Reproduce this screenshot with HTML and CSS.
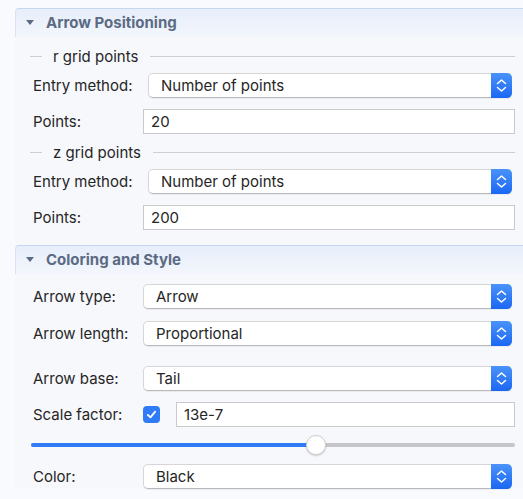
FILE: index.html
```html
<!DOCTYPE html>
<html lang="en">
<head>
<meta charset="utf-8">
<title>Arrow settings</title>
<link rel="stylesheet" href="styles.css">
</head>
<body>
<div class="panel">

  <section class="group">
    <div class="group-head"><span class="caret"></span>Arrow Positioning</div>
    <div class="group-body positioning">
      <div class="legend"><span class="stub"></span><span class="legend-text">r grid points</span><span class="rule"></span></div>
      <div class="row">
        <label class="label">Entry method:</label>
        <div class="select inset">Number of points<span class="stepper"><svg viewBox="0 0 21 25" width="21" height="25"><path d="M6.5 10.5 10.5 7 14.5 10.5M6.5 14.5 10.5 18 14.5 14.5"/></svg></span></div>
      </div>
      <div class="row">
        <label class="label">Points:</label>
        <div class="field">20</div>
      </div>
      <div class="legend"><span class="stub"></span><span class="legend-text">z grid points</span><span class="rule"></span></div>
      <div class="row">
        <label class="label">Entry method:</label>
        <div class="select inset">Number of points<span class="stepper"><svg viewBox="0 0 21 25" width="21" height="25"><path d="M6.5 10.5 10.5 7 14.5 10.5M6.5 14.5 10.5 18 14.5 14.5"/></svg></span></div>
      </div>
      <div class="row">
        <label class="label">Points:</label>
        <div class="field">200</div>
      </div>
    </div>
  </section>

  <section class="group">
    <div class="group-head"><span class="caret"></span>Coloring and Style</div>
    <div class="group-body styling">
      <div class="row">
        <label class="label">Arrow type:</label>
        <div class="select">Arrow<span class="stepper"><svg viewBox="0 0 21 25" width="21" height="25"><path d="M6.5 10.5 10.5 7 14.5 10.5M6.5 14.5 10.5 18 14.5 14.5"/></svg></span></div>
      </div>
      <div class="row gap-l">
        <label class="label">Arrow length:</label>
        <div class="select">Proportional<span class="stepper"><svg viewBox="0 0 21 25" width="21" height="25"><path d="M6.5 10.5 10.5 7 14.5 10.5M6.5 14.5 10.5 18 14.5 14.5"/></svg></span></div>
      </div>
      <div class="row gap-xl">
        <label class="label">Arrow base:</label>
        <div class="select">Tail<span class="stepper"><svg viewBox="0 0 21 25" width="21" height="25"><path d="M6.5 10.5 10.5 7 14.5 10.5M6.5 14.5 10.5 18 14.5 14.5"/></svg></span></div>
      </div>
      <div class="row">
        <label class="label">Scale factor:</label>
        <span class="check"><svg viewBox="0 0 17 17" width="17" height="17"><path d="M4.8 8.9 7.4 11.4 12.2 5.6"/></svg></span>
        <div class="field">13e-7</div>
      </div>
      <div class="slider">
        <div class="track"><div class="fill" style="width: 284px"></div></div>
        <div class="thumb" style="left: 275px"></div>
      </div>
      <div class="row after-slider">
        <label class="label">Color:</label>
        <div class="select">Black<span class="stepper"><svg viewBox="0 0 21 25" width="21" height="25"><path d="M6.5 10.5 10.5 7 14.5 10.5M6.5 14.5 10.5 18 14.5 14.5"/></svg></span></div>
      </div>
    </div>
  </section>

</div>
</body>
</html>
```

FILE: styles.css
```css
* {
  box-sizing: border-box;
}

html, body {
  margin: 0;
  padding: 0;
  background: #f9fafd;
}

body {
  font-family: Inter, "Noto Sans", sans-serif;
  font-size: 15px;
  color: #262626;
  width: 523px;
  height: 499px;
  overflow: hidden;
}

.panel {
  margin: 8px 0 0 15px;
}

/* collapsible group header */
.group-head {
  height: 29px;
  display: flex;
  align-items: center;
  padding-left: 10px;
  padding-bottom: 2px;
  border-top: 1px solid #c7d7f1;
  border-left: 1px solid #d9e3f4;
  border-top-left-radius: 4px;
  background: linear-gradient(#e7eefa, #f3f6fc);
  font-weight: 700;
  color: #5b6b83;
}

.caret {
  width: 0;
  height: 0;
  border-left: 4.5px solid transparent;
  border-right: 4.5px solid transparent;
  border-top: 5px solid #5b6b83;
  margin-right: 12px;
  margin-top: 1px;
}

.group-body {
  background: #f7f8fc;
  display: flex;
  flex-direction: column;
  padding-right: 8px;
}

.positioning {
  padding-top: 9px;
  padding-bottom: 15px;
}

.positioning .legend + .row {
  margin-top: 7px;
}

.positioning .row + .row {
  margin-top: 11px;
}

.positioning .row + .legend {
  margin-top: 8px;
}

.styling {
  padding-top: 10px;
}

/* titled separator */
.legend {
  height: 20px;
  display: flex;
  align-items: center;
  padding-left: 15px;
}

.stub {
  width: 12px;
  border-top: 1px solid #cfcfd2;
}

.legend-text {
  margin: 0 12px 0 11px;
}

.rule {
  flex: 1;
  border-top: 1px solid #cfcfd2;
}

/* label + control rows */
.row {
  height: 25px;
  display: flex;
  align-items: center;
  padding-left: 18px;
}

.styling .row {
  margin-top: 11px;
}

.styling .row:first-child {
  margin-top: 0;
}

.styling .row.gap-l {
  margin-top: 12px;
}

.styling .row.gap-xl {
  margin-top: 20px;
}

.styling .row.after-slider {
  margin-top: 10px;
}

.label {
  width: 110px;
  flex: none;
}

.select {
  flex: 1;
  height: 25px;
  margin-right: 3px;
  position: relative;
  display: flex;
  align-items: center;
  padding-left: 12px;
  background: #fff;
  border: 1px solid #d6d6d8;
  border-bottom-color: #b9b9bc;
  border-radius: 5px;
  box-shadow: 0 1px 0 rgba(0, 0, 0, 0.05);
}

.select.inset {
  margin-left: 5px;
}

.stepper {
  position: absolute;
  top: -1px;
  right: -1px;
  width: 21px;
  height: 25px;
  border-radius: 0 5px 5px 0;
  background: linear-gradient(#4a93f9, #1b67f2);
}

.stepper svg {
  display: block;
}

.stepper path {
  fill: none;
  stroke: #fff;
  stroke-width: 1.5;
  stroke-linecap: round;
  stroke-linejoin: round;
}

.field {
  flex: 1;
  height: 25px;
  display: flex;
  align-items: center;
  padding-left: 7px;
  background: #fff;
  border: 1px solid #cacaca;
}

.check {
  width: 17px;
  height: 17px;
  flex: none;
  border-radius: 4px;
  background: #2f7cf6;
  margin-right: 16px;
}

.check svg {
  display: block;
}

.check path {
  fill: none;
  stroke: #fff;
  stroke-width: 1.8;
  stroke-linecap: round;
  stroke-linejoin: round;
}

/* value slider */
.slider {
  position: relative;
  height: 18px;
  margin: 9px 0 0 16px;
}

.track {
  position: absolute;
  left: 0;
  right: 0;
  top: 7px;
  height: 4px;
  border-radius: 2px;
  background: #c6c6c8;
  overflow: hidden;
}

.fill {
  height: 100%;
  background: #2f7cf6;
}

.thumb {
  position: absolute;
  top: -1px;
  width: 20px;
  height: 20px;
  border-radius: 50%;
  background: #fff;
  border: 1px solid #d0d0d2;
  box-shadow: 0 1px 2px rgba(0, 0, 0, 0.2);
}
```
